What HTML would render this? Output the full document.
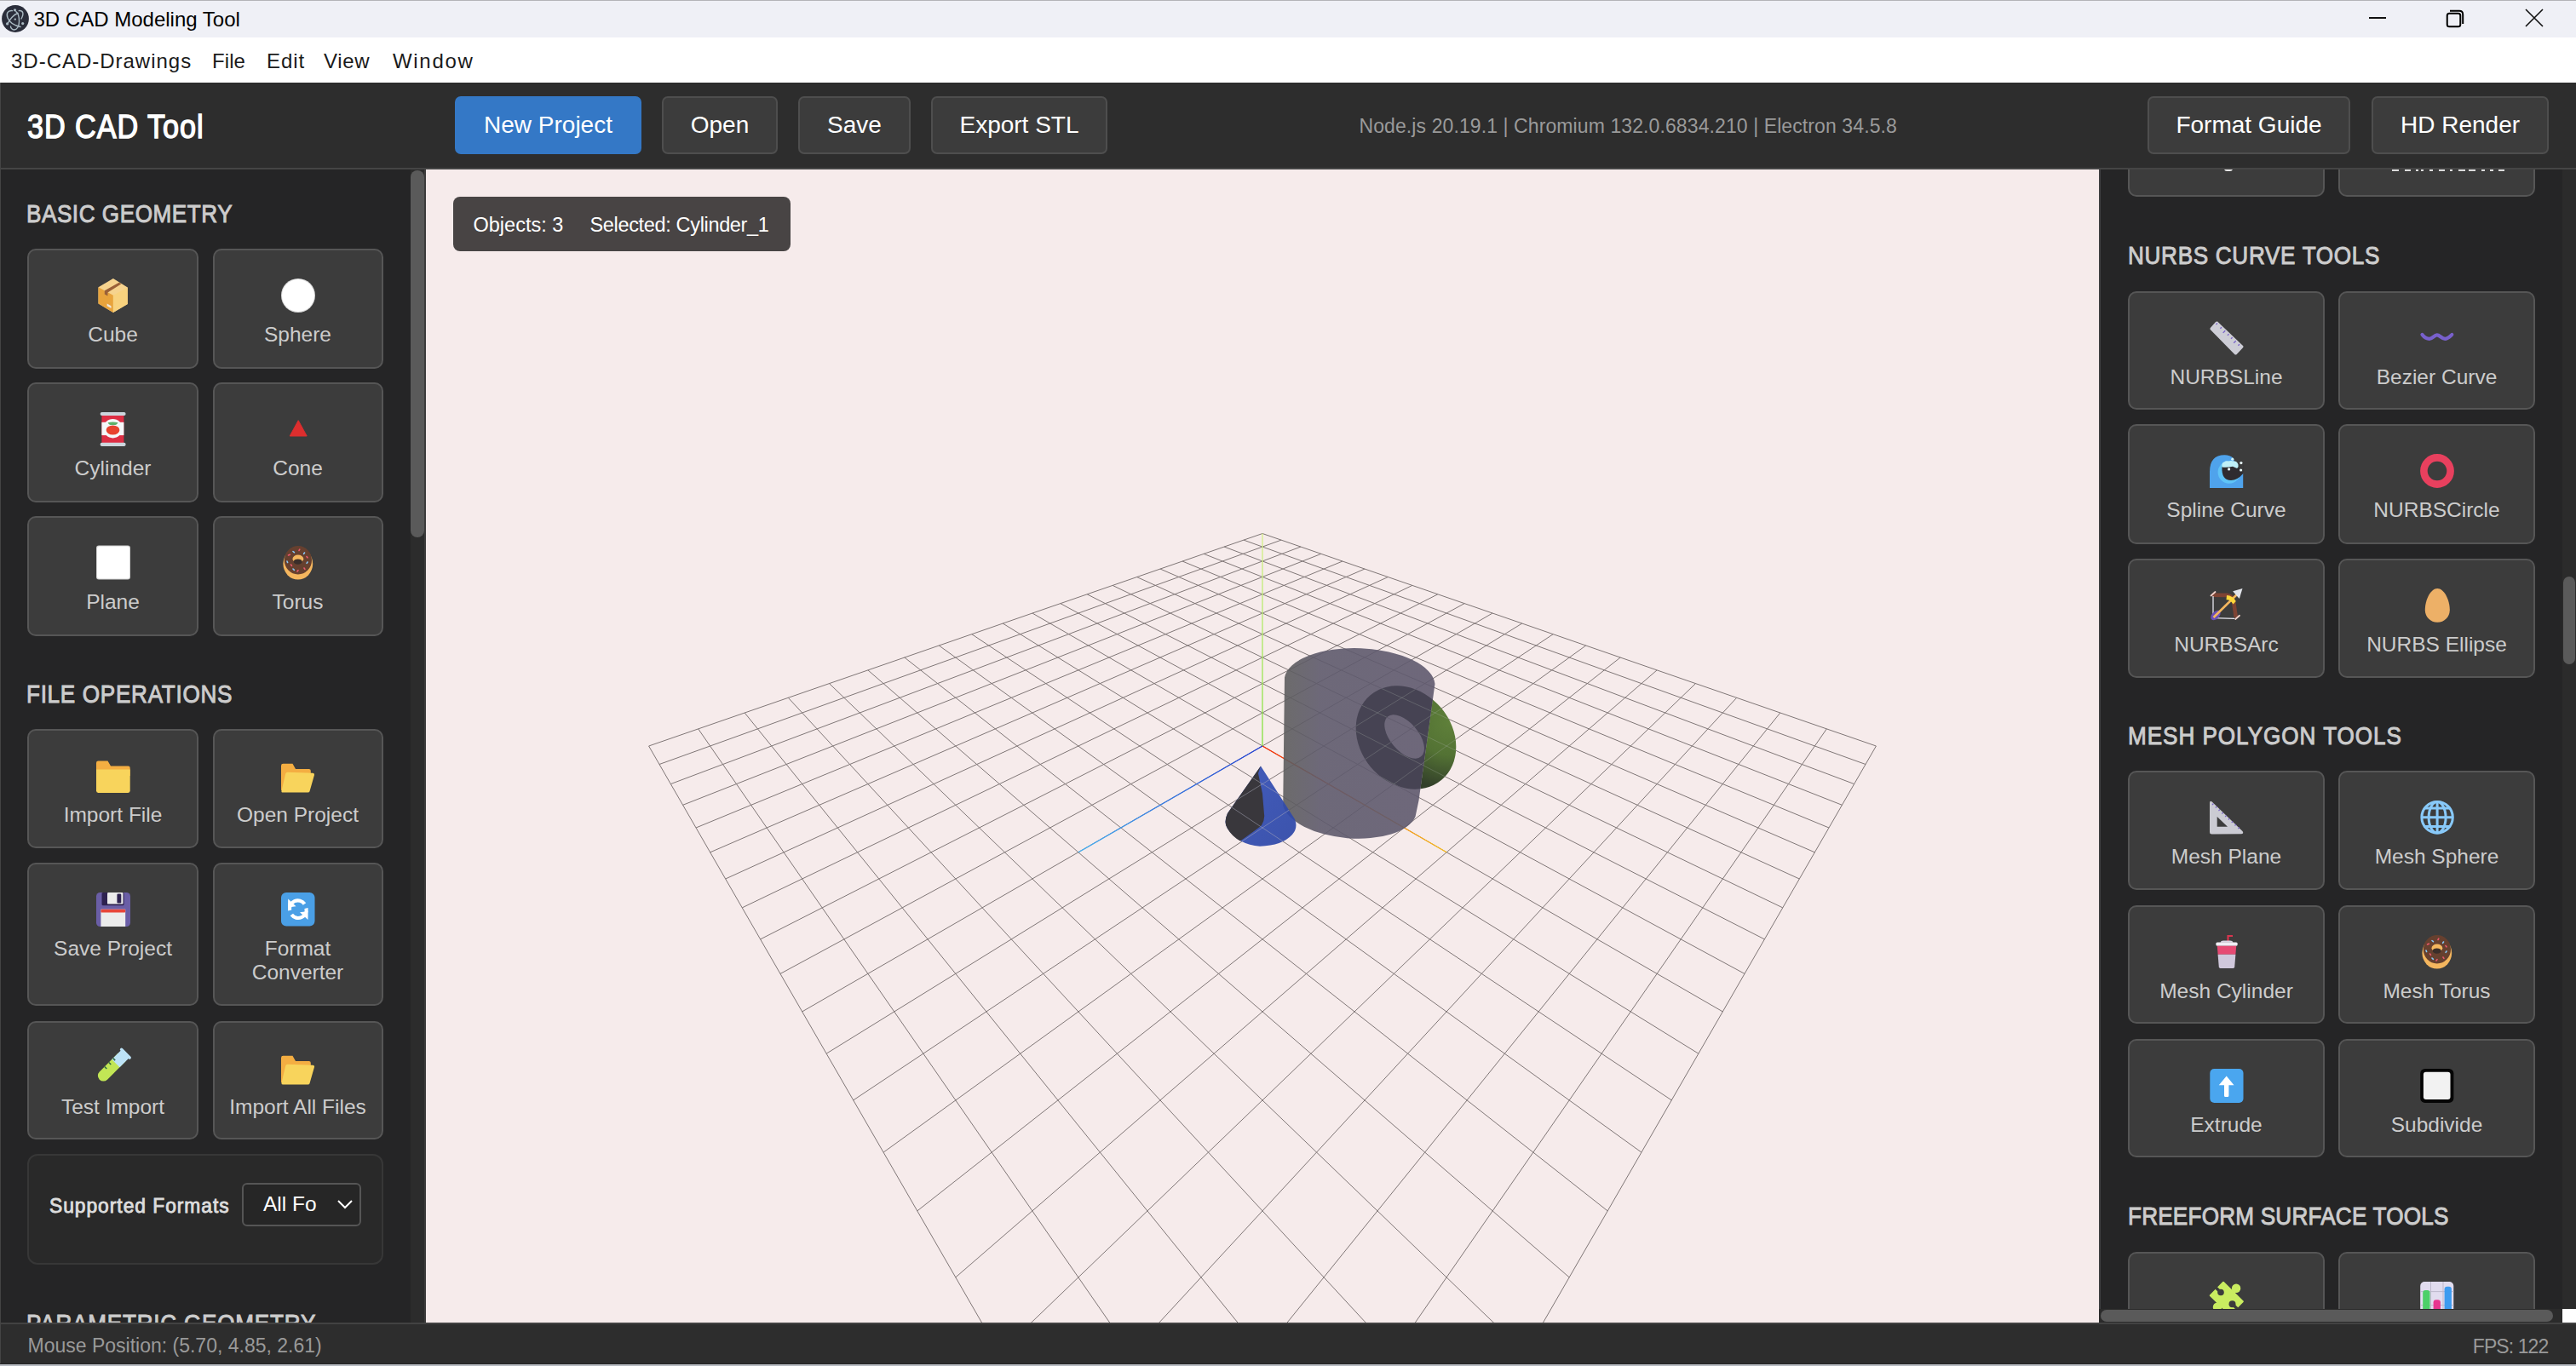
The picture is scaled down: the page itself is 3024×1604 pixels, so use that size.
<!DOCTYPE html><html><head><meta charset="utf-8"><title>3D CAD Modeling Tool</title><style>
html,body{margin:0;padding:0;width:3024px;height:1604px;overflow:hidden;background:#252526;font-family:"Liberation Sans", sans-serif}
.t{position:absolute;white-space:nowrap;line-height:1;font-family:"Liberation Sans", sans-serif}
.btn{position:absolute;box-sizing:border-box;border-radius:10px;background:#3c3c3c;border:2px solid #565656}
.hb{position:absolute;box-sizing:border-box;border-radius:7px;background:#3c3c3c;border:2px solid #4e4e4e}
</style></head><body>
<div style="position:absolute;left:0px;top:0px;width:3024px;height:44px;background:#eff0f6"></div>
<div style="position:absolute;left:0px;top:0px;width:3024px;height:1px;background:#b4b4b8"></div>
<svg width="36" height="36" viewBox="0 0 36 36" style="position:absolute;left:0;top:4px"><circle cx="18" cy="18" r="15.9" fill="#2b2e3b"/><g stroke="#a9b9c2" stroke-width="1.4" fill="none" stroke-linecap="round"><path d="M14.5 8.6 C9 8 7 12 9 17 C11 22 17 26 24 27.5"/><path d="M18.8 9.6 C21 11 22.5 16 22.5 21 C22.5 27 20 31 16.5 31 C14 31 12.5 28.5 12.5 27"/><path d="M22.2 8.6 C27 8 28.5 12 25 18 M9 24 C11 19 16 13 21 11.5"/></g><g fill="#a9b9c2"><circle cx="17.5" cy="7.8" r="1.6"/><circle cx="8.6" cy="23.9" r="1.6"/><circle cx="26.7" cy="23.6" r="1.6"/><circle cx="17.8" cy="18.6" r="1.2"/></g></svg>
<div class="t" style="left:39.50px;top:11.38px;font-size:24px;color:#000;font-weight:400;">3D CAD Modeling Tool</div>
<div style="position:absolute;left:2781px;top:20px;width:20px;height:2px;background:#111"></div>
<svg width="30" height="30" viewBox="0 0 30 30" style="position:absolute;left:2866px;top:6px"><rect x="6.75" y="9.75" width="15.5" height="15.5" rx="2.5" stroke="#000" stroke-width="2" fill="none"/><path d="M10 6.8 L21 6.8 Q25.2 6.8 25.2 11 L25.2 22" stroke="#000" stroke-width="2" fill="none"/></svg>
<svg width="30" height="30" viewBox="0 0 30 30" style="position:absolute;left:2960px;top:6px"><path d="M5 5 L25 25 M25 5 L5 25" stroke="#111" stroke-width="1.6"/></svg>
<div style="position:absolute;left:0px;top:44px;width:3024px;height:53px;background:#ffffff"></div>
<div class="t" style="left:13.00px;top:59.98px;font-size:24px;color:#1b1b1b;font-weight:400;letter-spacing:0.986px;">3D-CAD-Drawings</div>
<div class="t" style="left:248.90px;top:59.98px;font-size:24px;color:#1b1b1b;font-weight:400;letter-spacing:0.133px;">File</div>
<div class="t" style="left:313.00px;top:59.98px;font-size:24px;color:#1b1b1b;font-weight:400;letter-spacing:0.9px;">Edit</div>
<div class="t" style="left:380.10px;top:59.98px;font-size:24px;color:#1b1b1b;font-weight:400;letter-spacing:0.667px;">View</div>
<div class="t" style="left:460.90px;top:59.98px;font-size:24px;color:#1b1b1b;font-weight:400;letter-spacing:1.74px;">Window</div>
<div style="position:absolute;left:0px;top:97px;width:3024px;height:100px;background:#2d2d2d"></div>
<div style="position:absolute;left:0px;top:197px;width:3024px;height:2px;background:#454545"></div>
<div class="t" style="left:31.80px;top:129.73px;font-size:38px;color:#ffffff;font-weight:400;letter-spacing:1.056px;transform:scaleX(0.9);transform-origin:0 0;-webkit-text-stroke:1.4px #ffffff;">3D CAD Tool</div>
<div class="hb" style="left:534px;top:113px;width:219px;height:68px;background:#3478c6;border-color:#3478c6;"></div>
<div class="t" style="left:143.50px;width:1000px;text-align:center;top:132.99px;font-size:28px;color:#ffffff;font-weight:400;">New Project</div>
<div class="hb" style="left:777px;top:113px;width:136px;height:68px;"></div>
<div class="t" style="left:345.00px;width:1000px;text-align:center;top:132.99px;font-size:28px;color:#ffffff;font-weight:400;">Open</div>
<div class="hb" style="left:937px;top:113px;width:132px;height:68px;"></div>
<div class="t" style="left:503.00px;width:1000px;text-align:center;top:132.99px;font-size:28px;color:#ffffff;font-weight:400;">Save</div>
<div class="hb" style="left:1093px;top:113px;width:207px;height:68px;"></div>
<div class="t" style="left:696.50px;width:1000px;text-align:center;top:132.99px;font-size:28px;color:#ffffff;font-weight:400;">Export STL</div>
<div class="hb" style="left:2521px;top:113px;width:238px;height:68px;"></div>
<div class="t" style="left:2140.00px;width:1000px;text-align:center;top:132.99px;font-size:28px;color:#ffffff;font-weight:400;">Format Guide</div>
<div class="hb" style="left:2784px;top:113px;width:208px;height:68px;"></div>
<div class="t" style="left:2388.00px;width:1000px;text-align:center;top:132.99px;font-size:28px;color:#ffffff;font-weight:400;">HD Render</div>
<div class="t" style="left:1595.50px;top:137.13px;font-size:23px;color:#9a9a9a;font-weight:400;letter-spacing:0.097px;">Node.js 20.19.1 | Chromium 132.0.6834.210 | Electron 34.5.8</div>
<div style="position:absolute;left:0px;top:199px;width:500px;height:1354px;background:#252526"></div>
<div class="t" style="left:31.00px;top:235.80px;font-size:30px;color:#cccccc;font-weight:400;letter-spacing:0.628px;transform:scaleX(0.87);transform-origin:0 0;-webkit-text-stroke:1.0px #cccccc;">BASIC GEOMETRY</div>
<div class="btn" style="left:32px;top:292px;width:201px;height:141px"></div>
<svg width="40" height="40" viewBox="0 0 40 40" style="position:absolute;left:112.5px;top:327.0px;overflow:visible"><path d="M19.9 0 L36.8 10.4 L36.8 30 L19.9 40 L2.5 29.4 L2.5 10.2 Z" fill="#f6d38e"/><path d="M2.5 10.2 L19.9 19.8 L19.9 40 L2.5 29.4 Z" fill="#e8a33c"/><path d="M19.9 19.8 L36.8 10.4 L36.8 30 L19.9 40 Z" fill="#f8d27e"/><path d="M9.8 14.3 L26.7 4.7 L29.6 6.3 L13.4 16.4 L13.4 20.4 L9.8 18.5 Z" fill="#9a6038"/><path d="M12.6 29.6 L17.5 32.3 L17.5 35 L12.6 32.3 Z" fill="#efe7dc"/></svg>
<div class="t" style="left:-367.50px;width:1000px;text-align:center;top:381.26px;font-size:24.5px;color:#cccccc;font-weight:400;">Cube</div>
<div class="btn" style="left:249.5px;top:292px;width:200.0px;height:141px"></div>
<svg width="40" height="40" viewBox="0 0 40 40" style="position:absolute;left:329.5px;top:327.0px;overflow:visible"><circle cx="20" cy="20" r="20" fill="#d8d8d8"/><circle cx="20" cy="20" r="19" fill="#ffffff"/></svg>
<div class="t" style="left:-150.50px;width:1000px;text-align:center;top:381.26px;font-size:24.5px;color:#cccccc;font-weight:400;">Sphere</div>
<div class="btn" style="left:32px;top:449px;width:201px;height:141px"></div>
<svg width="40" height="40" viewBox="0 0 40 40" style="position:absolute;left:112.5px;top:484.0px;overflow:visible"><rect x="6.4" y="3" width="26" height="33.5" fill="#dd2e44"/><rect x="4.6" y="0" width="30" height="4" rx="2" fill="#ccd6dd"/><rect x="4.6" y="35.8" width="30" height="4.2" rx="2" fill="#ccd6dd"/><rect x="6.4" y="11.8" width="26" height="15.3" fill="#f5f8fa"/><circle cx="19.5" cy="19.2" r="11.2" fill="#f5f8fa"/><ellipse cx="19.5" cy="21" rx="7.85" ry="5.6" fill="#e8422f"/><path d="M13.6 12.2 Q19.5 11 25.5 12.2 Q24 15.6 19.5 15 Q15 15.6 13.6 12.2Z" fill="#5db06a"/></svg>
<div class="t" style="left:-367.50px;width:1000px;text-align:center;top:538.26px;font-size:24.5px;color:#cccccc;font-weight:400;">Cylinder</div>
<div class="btn" style="left:249.5px;top:449px;width:200.0px;height:141px"></div>
<svg width="40" height="40" viewBox="0 0 40 40" style="position:absolute;left:329.5px;top:484.0px;overflow:visible"><path d="M20.2 9.7 L30.2 28 L10.2 28 Z" fill="#dd2e2e" stroke="#dd2e2e" stroke-width="1" stroke-linejoin="round"/></svg>
<div class="t" style="left:-150.50px;width:1000px;text-align:center;top:538.26px;font-size:24.5px;color:#cccccc;font-weight:400;">Cone</div>
<div class="btn" style="left:32px;top:606px;width:201px;height:141px"></div>
<svg width="40" height="40" viewBox="0 0 40 40" style="position:absolute;left:112.5px;top:641.0px;overflow:visible"><rect x="0" y="-0.5" width="40" height="40" rx="3" fill="#d0d0d0"/><rect x="1" y="0.5" width="38" height="38" rx="2.5" fill="#ffffff"/></svg>
<div class="t" style="left:-367.50px;width:1000px;text-align:center;top:695.26px;font-size:24.5px;color:#cccccc;font-weight:400;">Plane</div>
<div class="btn" style="left:249.5px;top:606px;width:200.0px;height:141px"></div>
<svg width="40" height="40" viewBox="0 0 40 40" style="position:absolute;left:329.5px;top:641.0px;overflow:visible"><ellipse cx="19.8" cy="21" rx="17.4" ry="18.6" fill="#f4b65e"/><ellipse cx="19.9" cy="16.8" rx="16.1" ry="16.7" fill="#66402f"/><ellipse cx="19.9" cy="15.2" rx="6.4" ry="4.6" fill="#f4b65e"/><ellipse cx="19.7" cy="18.6" rx="5" ry="3.2" fill="#3a2e2a"/><g stroke-width="1.6" stroke-linecap="round"><path d="M14 6.5 l1.4 1.2" stroke="#88c9f9"/><path d="M21 5.5 l0.8 -1.3" stroke="#ea596e"/><path d="M27.5 8 l-0.9 1.4" stroke="#88c9f9"/><path d="M8.5 11 l1.8 -0.8" stroke="#ea596e"/><path d="M30 12.5 l1 1.3" stroke="#ea596e"/><path d="M7 18 l0.6 1.5" stroke="#88c9f9"/><path d="M11.5 22 l1 1.4" stroke="#ea596e"/><path d="M31 19 l-0.9 1.4" stroke="#88c9f9"/><path d="M14 27 l1.4 1.3" stroke="#88c9f9"/><path d="M27 26 l0.9 1.4" stroke="#ea596e"/><path d="M19 30 l1 -1.4" stroke="#ea596e"/></g></svg>
<div class="t" style="left:-150.50px;width:1000px;text-align:center;top:695.26px;font-size:24.5px;color:#cccccc;font-weight:400;">Torus</div>
<div class="t" style="left:31.00px;top:799.50px;font-size:30px;color:#cccccc;font-weight:400;letter-spacing:0.805px;transform:scaleX(0.87);transform-origin:0 0;-webkit-text-stroke:1.0px #cccccc;">FILE OPERATIONS</div>
<div class="btn" style="left:32px;top:856px;width:201px;height:140px"></div>
<svg width="40" height="40" viewBox="0 0 40 40" style="position:absolute;left:112.5px;top:891.0px;overflow:visible"><path d="M0 5 Q0 2.6 2.4 2.6 L13.5 2.6 L17 8.6 L37.5 8.6 Q39.7 8.6 39.7 10.8 L39.7 20 L0 20 Z" fill="#f4ae42"/><path d="M0 12.4 L39.7 12.4 L39.7 37.6 Q39.7 40 37.3 40 L2.4 40 Q0 40 0 37.6 Z" fill="#f8d45c"/></svg>
<div class="t" style="left:-367.50px;width:1000px;text-align:center;top:945.26px;font-size:24.5px;color:#cccccc;font-weight:400;">Import File</div>
<div class="btn" style="left:249.5px;top:856px;width:200.0px;height:140px"></div>
<svg width="40" height="40" viewBox="0 0 40 40" style="position:absolute;left:329.5px;top:891.0px;overflow:visible"><path d="M0 8.2 Q0 5.8 2.4 5.8 L13.5 5.8 L17 11.9 L32.6 11.9 Q34.8 11.9 34.8 14 L34.8 30 L0 37 Z" fill="#f4ae42"/><path d="M7.4 15.7 L37.4 16.8 Q39.5 17 39 19 L33.5 38.2 Q33 39.6 31.5 39.6 L2.4 39.6 Q0 39.6 0.5 37.4 L5.2 17.6 Q5.6 15.7 7.4 15.7 Z" fill="#f8d45c"/></svg>
<div class="t" style="left:-150.50px;width:1000px;text-align:center;top:945.26px;font-size:24.5px;color:#cccccc;font-weight:400;">Open Project</div>
<div class="btn" style="left:32px;top:1013px;width:201px;height:168px"></div>
<svg width="40" height="40" viewBox="0 0 40 40" style="position:absolute;left:112.5px;top:1048.0px;overflow:visible"><rect x="0" y="0" width="40" height="40" rx="4.5" fill="#6a5ea6"/><rect x="6.5" y="0" width="26.1" height="15.2" rx="1.5" fill="#2e2250"/><rect x="13" y="0" width="18.5" height="13.6" rx="1.2" fill="#ececec"/><rect x="24.4" y="1.5" width="4.9" height="10.9" rx="1.2" fill="#2e2250"/><rect x="5.4" y="19.7" width="28.8" height="20.3" fill="#ececec"/><rect x="5.4" y="19.7" width="28.8" height="3.8" rx="1" fill="#e8463a"/></svg>
<div class="t" style="left:-367.50px;width:1000px;text-align:center;top:1102.26px;font-size:24.5px;color:#cccccc;font-weight:400;">Save Project</div>
<div class="btn" style="left:249.5px;top:1013px;width:200.0px;height:168px"></div>
<svg width="40" height="40" viewBox="0 0 40 40" style="position:absolute;left:329.5px;top:1048.0px;overflow:visible"><rect x="0" y="0" width="39.5" height="39.5" rx="6" fill="#4a9fe6"/><path d="M10.2 21 A9.6 9.6 0 0 1 27.5 13.5" stroke="#fff" stroke-width="4.2" fill="none"/><path d="M8.2 7.5 L8 17.5 L17.5 16.3 Z" fill="#fff"/><path d="M29.5 18.5 A9.6 9.6 0 0 1 12.3 26" stroke="#fff" stroke-width="4.2" fill="none"/><path d="M31.5 32 L31.6 22 L22 23.3 Z" fill="#fff"/></svg>
<div class="t" style="left:-150.50px;width:1000px;text-align:center;top:1102.26px;font-size:24.5px;color:#cccccc;font-weight:400;">Format</div>
<div class="t" style="left:-150.50px;width:1000px;text-align:center;top:1130.26px;font-size:24.5px;color:#cccccc;font-weight:400;">Converter</div>
<div class="btn" style="left:32px;top:1199px;width:201px;height:139px"></div>
<svg width="40" height="40" viewBox="0 0 40 40" style="position:absolute;left:112.5px;top:1234.0px;overflow:visible"><g transform="rotate(45 19 18.5)"><rect x="12.5" y="-3" width="13" height="43" rx="6.5" fill="#c2e655"/><path d="M12.5 -3 L25.5 -3 L25.5 13 L12.5 13 Z" fill="#bde3f7"/><rect x="10.5" y="-5" width="17" height="3.5" rx="1.7" fill="#bde3f7"/><path d="M12.5 11 l3.5 0 M12.5 18 l3.5 0 M12.5 25 l3.5 0" stroke="#2f6b45" stroke-width="1.6"/></g></svg>
<div class="t" style="left:-367.50px;width:1000px;text-align:center;top:1288.26px;font-size:24.5px;color:#cccccc;font-weight:400;">Test Import</div>
<div class="btn" style="left:249.5px;top:1199px;width:200.0px;height:139px"></div>
<svg width="40" height="40" viewBox="0 0 40 40" style="position:absolute;left:329.5px;top:1234.0px;overflow:visible"><path d="M0 8.2 Q0 5.8 2.4 5.8 L13.5 5.8 L17 11.9 L32.6 11.9 Q34.8 11.9 34.8 14 L34.8 30 L0 37 Z" fill="#f4ae42"/><path d="M7.4 15.7 L37.4 16.8 Q39.5 17 39 19 L33.5 38.2 Q33 39.6 31.5 39.6 L2.4 39.6 Q0 39.6 0.5 37.4 L5.2 17.6 Q5.6 15.7 7.4 15.7 Z" fill="#f8d45c"/></svg>
<div class="t" style="left:-150.50px;width:1000px;text-align:center;top:1288.26px;font-size:24.5px;color:#cccccc;font-weight:400;">Import All Files</div>
<div style="position:absolute;left:32px;top:1355px;width:418px;height:130px;box-sizing:border-box;border:2px solid #373737;border-radius:12px;background:#292929"></div>
<div class="t" style="left:57.50px;top:1404.18px;font-size:24px;color:#dddddd;font-weight:400;letter-spacing:1.02px;transform:scaleX(0.95);transform-origin:0 0;-webkit-text-stroke:0.9px #dddddd;">Supported Formats</div>
<div style="position:absolute;left:284px;top:1389px;width:140px;height:51px;box-sizing:border-box;border:2px solid #555;border-radius:6px;background:#262626"></div>
<div class="t" style="left:309.00px;top:1402.16px;font-size:24.5px;color:#ffffff;font-weight:400;">All Fo</div>
<svg width="20" height="14" viewBox="0 0 20 14" style="position:absolute;left:395px;top:1407px"><path d="M2 3 L10 11 L18 3" stroke="#fff" stroke-width="2" fill="none"/></svg>
<div class="t" style="left:31.00px;top:1538.60px;font-size:30px;color:#cccccc;font-weight:400;letter-spacing:0.894px;transform:scaleX(0.87);transform-origin:0 0;-webkit-text-stroke:1.0px #cccccc;">PARAMETRIC GEOMETRY</div>
<div style="position:absolute;left:482px;top:199px;width:16px;height:1354px;background:#2c2c2c"></div>
<div style="position:absolute;left:498px;top:199px;width:2px;height:1354px;background:#3c3b3b"></div>
<div style="position:absolute;left:482px;top:200px;width:16px;height:431px;background:#5a5a5a;border-radius:8px"></div>
<div style="position:absolute;left:500px;top:199px;width:1964px;height:1354px;background:#f6ebeb;overflow:hidden">
<svg width="1964" height="1354" viewBox="500 199 1964 1354" style="position:absolute;left:0;top:0"><defs><linearGradient id="gx" gradientUnits="userSpaceOnUse" x1="1482.0" y1="876.0" x2="1698.1" y2="1000.8"><stop offset="0" stop-color="#ff2a00"/><stop offset="1" stop-color="#ffc21a"/></linearGradient><linearGradient id="gy" gradientUnits="userSpaceOnUse" x1="1482.0" y1="876.0" x2="1482.0" y2="626.5"><stop offset="0" stop-color="#7fe03a"/><stop offset="1" stop-color="#d7f08a"/></linearGradient><linearGradient id="gz" gradientUnits="userSpaceOnUse" x1="1482.0" y1="876.0" x2="1265.9" y2="1000.8"><stop offset="0" stop-color="#1d3ddb"/><stop offset="1" stop-color="#47b4f5"/></linearGradient></defs><path d="M1482.0 626.5L761.6 876.0M1482.0 626.5L2202.4 876.0M1504.1 634.1L774.0 897.5M1459.9 634.1L2190.0 897.5M1527.0 642.0L787.3 920.6M1437.0 642.0L2176.7 920.6M1551.0 650.3L801.6 945.3M1413.0 650.3L2162.4 945.3M1576.0 659.0L817.0 972.0M1388.0 659.0L2147.0 972.0M1602.1 668.0L833.7 1000.8M1361.9 668.0L2130.3 1000.8M1629.4 677.5L851.7 1032.0M1334.6 677.5L2112.3 1032.0M1657.9 687.4L871.2 1065.9M1306.1 687.4L2092.8 1065.9M1687.8 697.8L892.6 1102.9M1276.2 697.8L2071.4 1102.9M1719.2 708.6L916.0 1143.4M1244.8 708.6L2048.0 1143.4M1752.1 720.0L941.7 1187.9M1211.9 720.0L2022.3 1187.9M1786.8 732.0L970.1 1237.2M1177.2 732.0L1993.9 1237.2M1823.2 744.7L1001.7 1291.9M1140.8 744.7L1962.3 1291.9M1861.7 758.0L1037.1 1353.1M1102.3 758.0L1926.9 1353.1M1902.2 772.0L1076.8 1421.9M1061.8 772.0L1887.2 1421.9M1945.1 786.9L1121.8 1499.9M1018.9 786.9L1842.2 1499.9M1990.5 802.6L1173.3 1589.0M973.5 802.6L1790.7 1589.0M2038.7 819.3L1232.6 1691.8M925.3 819.3L1731.4 1691.8M2089.8 837.0L1301.9 1811.8M874.2 837.0L1662.1 1811.8M2144.3 855.9L1383.8 1953.6M819.7 855.9L1580.2 1953.6M2202.4 876.0L1482.0 2123.7M761.6 876.0L1482.0 2123.7" stroke="#7f7676" stroke-width="1" fill="none"/><path d="M1482.0 876.0L1698.1 1000.8" stroke="url(#gx)" stroke-width="1.3" fill="none"/><path d="M1482.0 876.0L1482.0 626.5" stroke="url(#gy)" stroke-width="1.3" fill="none"/><path d="M1482.0 876.0L1265.9 1000.8" stroke="url(#gz)" stroke-width="1.3" fill="none"/>
<defs>
 <clipPath id="cylclip"><path d="M1508 795.5 A88.5 40.5 2.5 0 1 1684.5 803 L1665.5 940 L1661.5 959 A79 38 5 0 1 1506.2 946 Z"/></clipPath>
 <clipPath id="outcyl"><path d="M1684 780 L1740 780 L1740 960 L1665.5 940 L1684 806 Z"/></clipPath>
 <linearGradient id="cylg" x1="0" y1="0" x2="1" y2="0"><stop offset="0" stop-color="#5d5d5d"/><stop offset="0.25" stop-color="#5e5a6c"/><stop offset="1" stop-color="#5f596e"/></linearGradient>
 <radialGradient id="greeng" gradientUnits="userSpaceOnUse" cx="1702" cy="848" r="78"><stop offset="0" stop-color="#5f803a"/><stop offset="0.5" stop-color="#537234"/><stop offset="1" stop-color="#33402a"/></radialGradient>
 <linearGradient id="coneb" x1="0" y1="0" x2="1" y2="1"><stop offset="0" stop-color="#3551b8"/><stop offset="1" stop-color="#2f48a8"/></linearGradient>
</defs>
<path d="M1508 795.5 A88.5 40.5 2.5 0 1 1684.5 803 L1665.5 940 L1661.5 959 A79 38 5 0 1 1506.2 946 Z" fill="url(#cylg)" opacity="0.9"/>
<clipPath id="torouter"><ellipse cx="1650.5" cy="866" rx="65" ry="54" transform="rotate(50 1650.5 866)"/></clipPath><g clip-path="url(#outcyl)"><rect x="1640" y="780" width="100" height="180" fill="url(#greeng)" clip-path="url(#torouter)"/></g>
<g clip-path="url(#cylclip)">
 <path fill-rule="evenodd" fill="#3f3d4c" opacity="0.85" d="M1650.5 866 m-65 0 a65 54 0 1 0 130 0 a65 54 0 1 0 -130 0 Z M1648.5 866.8 m-30.5 0 a30.5 16.5 0 1 0 61 0 a30.5 16.5 0 1 0 -61 0 Z" transform="rotate(50 1650.5 866)"/>
</g>
<g opacity="0.93">
 <path d="M1480 899.5 L1441 955 Q1436 966 1441 973 Q1454 992 1479 993.7 Q1505 993 1517 980 Q1524 972 1520 962 Z" fill="url(#coneb)"/>
 <path d="M1480 899.5 L1441 955 Q1436 966 1441 973 Q1446 982 1456 987.5 Q1478 972 1481 969 Q1485 962 1484 956 L1482 932 L1477 908 Z" fill="#2b2a2f"/>
</g>
<defs><clipPath id="coneclip"><path d="M1480 899.5 L1441 955 Q1436 966 1441 973 Q1454 992 1479 993.7 Q1505 993 1517 980 Q1524 972 1520 962 Z"/></clipPath><clipPath id="torclip"><path clip-rule="evenodd" d="M1650.5 866 m-65 0 a65 54 0 1 0 130 0 a65 54 0 1 0 -130 0 Z M1648.5 866.8 m-30.5 0 a30.5 16.5 0 1 0 61 0 a30.5 16.5 0 1 0 -61 0 Z" transform="rotate(50 1650.5 866)"/></clipPath></defs><g clip-path="url(#coneclip)"><path d="M1482.0 626.5L761.6 876.0M1482.0 626.5L2202.4 876.0M1504.1 634.1L774.0 897.5M1459.9 634.1L2190.0 897.5M1527.0 642.0L787.3 920.6M1437.0 642.0L2176.7 920.6M1551.0 650.3L801.6 945.3M1413.0 650.3L2162.4 945.3M1576.0 659.0L817.0 972.0M1388.0 659.0L2147.0 972.0M1602.1 668.0L833.7 1000.8M1361.9 668.0L2130.3 1000.8M1629.4 677.5L851.7 1032.0M1334.6 677.5L2112.3 1032.0M1657.9 687.4L871.2 1065.9M1306.1 687.4L2092.8 1065.9M1687.8 697.8L892.6 1102.9M1276.2 697.8L2071.4 1102.9M1719.2 708.6L916.0 1143.4M1244.8 708.6L2048.0 1143.4M1752.1 720.0L941.7 1187.9M1211.9 720.0L2022.3 1187.9M1786.8 732.0L970.1 1237.2M1177.2 732.0L1993.9 1237.2M1823.2 744.7L1001.7 1291.9M1140.8 744.7L1962.3 1291.9M1861.7 758.0L1037.1 1353.1M1102.3 758.0L1926.9 1353.1M1902.2 772.0L1076.8 1421.9M1061.8 772.0L1887.2 1421.9M1945.1 786.9L1121.8 1499.9M1018.9 786.9L1842.2 1499.9M1990.5 802.6L1173.3 1589.0M973.5 802.6L1790.7 1589.0M2038.7 819.3L1232.6 1691.8M925.3 819.3L1731.4 1691.8M2089.8 837.0L1301.9 1811.8M874.2 837.0L1662.1 1811.8M2144.3 855.9L1383.8 1953.6M819.7 855.9L1580.2 1953.6M2202.4 876.0L1482.0 2123.7M761.6 876.0L1482.0 2123.7" stroke="#b8b8c8" stroke-width="1" fill="none" opacity="0.5"/></g><g clip-path="url(#torclip)"><path d="M1482.0 626.5L761.6 876.0M1482.0 626.5L2202.4 876.0M1504.1 634.1L774.0 897.5M1459.9 634.1L2190.0 897.5M1527.0 642.0L787.3 920.6M1437.0 642.0L2176.7 920.6M1551.0 650.3L801.6 945.3M1413.0 650.3L2162.4 945.3M1576.0 659.0L817.0 972.0M1388.0 659.0L2147.0 972.0M1602.1 668.0L833.7 1000.8M1361.9 668.0L2130.3 1000.8M1629.4 677.5L851.7 1032.0M1334.6 677.5L2112.3 1032.0M1657.9 687.4L871.2 1065.9M1306.1 687.4L2092.8 1065.9M1687.8 697.8L892.6 1102.9M1276.2 697.8L2071.4 1102.9M1719.2 708.6L916.0 1143.4M1244.8 708.6L2048.0 1143.4M1752.1 720.0L941.7 1187.9M1211.9 720.0L2022.3 1187.9M1786.8 732.0L970.1 1237.2M1177.2 732.0L1993.9 1237.2M1823.2 744.7L1001.7 1291.9M1140.8 744.7L1962.3 1291.9M1861.7 758.0L1037.1 1353.1M1102.3 758.0L1926.9 1353.1M1902.2 772.0L1076.8 1421.9M1061.8 772.0L1887.2 1421.9M1945.1 786.9L1121.8 1499.9M1018.9 786.9L1842.2 1499.9M1990.5 802.6L1173.3 1589.0M973.5 802.6L1790.7 1589.0M2038.7 819.3L1232.6 1691.8M925.3 819.3L1731.4 1691.8M2089.8 837.0L1301.9 1811.8M874.2 837.0L1662.1 1811.8M2144.3 855.9L1383.8 1953.6M819.7 855.9L1580.2 1953.6M2202.4 876.0L1482.0 2123.7M761.6 876.0L1482.0 2123.7" stroke="#b0b8b0" stroke-width="1" fill="none" opacity="0.28"/></g></svg>
</div>
<div style="position:absolute;left:532px;top:231px;width:396px;height:63.5px;background:rgba(0,0,0,0.71);border-radius:8px"></div>
<div class="t" style="left:555.50px;top:252.90px;font-size:23.5px;color:#ffffff;font-weight:400;">Objects: 3</div>
<div class="t" style="left:692.50px;top:252.90px;font-size:23.5px;color:#ffffff;font-weight:400;letter-spacing:-0.34px;">Selected: Cylinder_1</div>
<div style="position:absolute;left:2464px;top:199px;width:560px;height:1354px;background:#252526;overflow:hidden">
</div>
<div style="position:absolute;left:2464px;top:199px;width:2px;height:1338px;background:#3f3f41"></div>
<div style="position:absolute;left:2464px;top:199px;width:544px;height:1338px;overflow:hidden">
<div class="btn" style="left:34px;top:-108px;width:231px;height:140px"></div>
<div class="btn" style="left:281px;top:-108px;width:231px;height:140px"></div>
<div style="position:absolute;left:147px;top:-1px;width:9.5px;height:3px;border-radius:0 0 5px 5px;background:#e8e8e8"></div>
<div style="position:absolute;left:344px;top:0px;width:8px;height:1.5px;background:#dcdcdc"></div>
<div style="position:absolute;left:359px;top:0px;width:7px;height:1.5px;background:#dcdcdc"></div>
<div style="position:absolute;left:372px;top:0px;width:3px;height:1.5px;background:#dcdcdc"></div>
<div style="position:absolute;left:378px;top:0px;width:3px;height:1.5px;background:#dcdcdc"></div>
<div style="position:absolute;left:388px;top:0px;width:4px;height:1.5px;background:#dcdcdc"></div>
<div style="position:absolute;left:399px;top:0px;width:7px;height:1.5px;background:#dcdcdc"></div>
<div style="position:absolute;left:412px;top:0px;width:3px;height:1.5px;background:#dcdcdc"></div>
<div style="position:absolute;left:422px;top:0px;width:8px;height:1.5px;background:#dcdcdc"></div>
<div style="position:absolute;left:434px;top:0px;width:8px;height:1.5px;background:#dcdcdc"></div>
<div style="position:absolute;left:449px;top:0px;width:4px;height:1.5px;background:#dcdcdc"></div>
<div style="position:absolute;left:459px;top:0px;width:4px;height:1.5px;background:#dcdcdc"></div>
<div style="position:absolute;left:469px;top:0px;width:7px;height:1.5px;background:#dcdcdc"></div>
</div>
<div class="t" style="left:2498.00px;top:284.60px;font-size:30px;color:#cccccc;font-weight:400;letter-spacing:0.805px;transform:scaleX(0.87);transform-origin:0 0;-webkit-text-stroke:1.0px #cccccc;">NURBS CURVE TOOLS</div>
<div class="btn" style="left:2498px;top:342px;width:231px;height:139px"></div>
<svg width="40" height="40" viewBox="0 0 40 40" style="position:absolute;left:2593.5px;top:376.5px;overflow:visible"><path d="M9.1 0.6 L39.3 29.2 Q40 30.3 39 31.2 L31.5 39.2 Q30.4 40 29.4 39.2 L0.7 10 Q0 9 0.8 8 L7 1 Q8 0 9.1 0.6 Z" fill="#cdcdd6"/><g stroke="#7a64c8" stroke-width="1.3"><path d="M9 2.5 l-1.6 1.6 M14 7.2 l-1.6 1.6 M18.3 11.3 l-2.6 2.6 M22.5 15.3 l-1.6 1.6 M26.6 19.2 l-1.6 1.6 M30.8 23.2 l-2.6 2.6 M35 27.2 l-1.6 1.6"/></g></svg>
<div class="t" style="left:2113.50px;width:1000px;text-align:center;top:431.26px;font-size:24.5px;color:#cccccc;font-weight:400;">NURBSLine</div>
<div class="btn" style="left:2745px;top:342px;width:231px;height:139px"></div>
<svg width="40" height="40" viewBox="0 0 40 40" style="position:absolute;left:2840.5px;top:376.5px;overflow:visible"><path d="M2.5 16 C5 19.3 8 20.8 11 20.8 C14.5 20.8 16.5 16.4 19.8 16.4 C23 16.4 25.5 20.8 29.2 20.8 C32.5 20.8 35 18 37.3 16" stroke="#7860cc" stroke-width="4.2" fill="none" stroke-linecap="round"/></svg>
<div class="t" style="left:2360.50px;width:1000px;text-align:center;top:431.26px;font-size:24.5px;color:#cccccc;font-weight:400;">Bezier Curve</div>
<div class="btn" style="left:2498px;top:498px;width:231px;height:141px"></div>
<svg width="40" height="40" viewBox="0 0 40 40" style="position:absolute;left:2593.5px;top:532.5px;overflow:visible"><path d="M0 40 V21 Q0 1.3 17.5 1.3 Q24 1.3 27.5 5 L31 14 L39.2 22.5 V40 Z" fill="#4fa3ec"/><circle cx="22.8" cy="21.5" r="13.2" fill="#5fc4f7"/><path d="M14.5 15 Q13.5 31 25 31 Q32.5 31 39.3 23 L39.3 13 L30 12 Z" fill="#2f2c30"/><path d="M39.3 10 L39.3 22.6 L31.5 14 Z M27.5 0 L40 0 L40 10 L31 10 Z" fill="#3c3c3c"/><path d="M14.5 15.5 Q13.8 10 17 9.5 Q19 7.6 22 8.6 Q25 7.3 28 8.6 Q31 8 32.5 10.5 Q34 12 33.5 15 Q33 17.5 31 16.5 L27 14.8 Q20 16.5 14.5 15.5Z" fill="#bff0f8"/><circle cx="26.8" cy="6.2" r="1.6" fill="#cff4fa"/><circle cx="36.9" cy="10.6" r="1.6" fill="#e8f8fa"/><circle cx="22.6" cy="17.9" r="1.6" fill="#e8f8fa"/><circle cx="36.6" cy="19" r="1.6" fill="#e8f8fa"/></svg>
<div class="t" style="left:2113.50px;width:1000px;text-align:center;top:587.26px;font-size:24.5px;color:#cccccc;font-weight:400;">Spline Curve</div>
<div class="btn" style="left:2745px;top:498px;width:231px;height:141px"></div>
<svg width="40" height="40" viewBox="0 0 40 40" style="position:absolute;left:2840.5px;top:532.5px;overflow:visible"><circle cx="20" cy="20" r="15.6" stroke="#e8405e" stroke-width="8.6" fill="none"/></svg>
<div class="t" style="left:2360.50px;width:1000px;text-align:center;top:587.26px;font-size:24.5px;color:#cccccc;font-weight:400;">NURBSCircle</div>
<div class="btn" style="left:2498px;top:656px;width:231px;height:140px"></div>
<svg width="40" height="40" viewBox="0 0 40 40" style="position:absolute;left:2593.5px;top:690.5px;overflow:visible"><path d="M3 7.8 L19.8 7.9 Q26 8.5 28 15 L30.8 34" stroke="#7e4333" stroke-width="4.6" fill="none"/><path d="M4 9 L4 34.6 L29.3 35.4" stroke="#e6e6ee" stroke-width="1.3" fill="none"/><path d="M1.5 8.5 L6.5 4 M30.2 36 L35 31.8" stroke="#f0d0c8" stroke-width="1.8" stroke-linecap="round"/><ellipse cx="7" cy="31.5" rx="6.8" ry="4.2" fill="#6a4fb8" transform="rotate(-45 7 31.5)"/><path d="M4.5 34 L33 6" stroke="#f4b65e" stroke-width="2.6"/><path d="M27.1 3.2 L38.5 -0.1 L34.8 12 Z" fill="#e1e4ea"/><path d="M20 8 Q27 8.3 30.8 15 L27.5 18.5 Q24.5 13 19.5 13.2 Z" fill="#fdd83a"/></svg>
<div class="t" style="left:2113.50px;width:1000px;text-align:center;top:745.26px;font-size:24.5px;color:#cccccc;font-weight:400;">NURBSArc</div>
<div class="btn" style="left:2745px;top:656px;width:231px;height:140px"></div>
<svg width="40" height="40" viewBox="0 0 40 40" style="position:absolute;left:2840.5px;top:690.5px;overflow:visible"><path d="M20.3 0 C28 0 34.8 13 34.8 25.3 C34.8 33.5 28.5 39.8 20.3 39.8 C12.2 39.8 5.8 33.5 5.8 25.3 C5.8 13 12.5 0 20.3 0 Z" fill="#edb067"/></svg>
<div class="t" style="left:2360.50px;width:1000px;text-align:center;top:745.26px;font-size:24.5px;color:#cccccc;font-weight:400;">NURBS Ellipse</div>
<div class="t" style="left:2498.00px;top:848.60px;font-size:30px;color:#cccccc;font-weight:400;letter-spacing:1.109px;transform:scaleX(0.87);transform-origin:0 0;-webkit-text-stroke:1.0px #cccccc;">MESH POLYGON TOOLS</div>
<div class="btn" style="left:2498px;top:905px;width:231px;height:140px"></div>
<svg width="40" height="40" viewBox="0 0 40 40" style="position:absolute;left:2593.5px;top:939.5px;overflow:visible"><path d="M0 3 Q0 -0.5 3 1.7 L38.5 36 Q40.5 39 37 39.3 L2.5 39.5 Q0 39.5 0 37 Z" fill="#cbcbd3"/><path d="M8.7 19.1 L21 30.7 L8.7 30.7 Z" fill="#3c3c3c"/><g stroke="#7a64c8" stroke-width="1.1"><path d="M4.5 3.5 l-1.5 1.5 M8.3 7 l-1.5 1.5 M12 10.5 l-1.5 1.5 M15.8 14 l-1.5 1.5 M19.6 17.5 l-1.5 1.5 M23.4 21 l-1.5 1.5 M27.2 24.5 l-1.5 1.5 M31 28 l-1.5 1.5 M34.8 31.5 l-1.5 1.5"/></g></svg>
<div class="t" style="left:2113.50px;width:1000px;text-align:center;top:994.26px;font-size:24.5px;color:#cccccc;font-weight:400;">Mesh Plane</div>
<div class="btn" style="left:2745px;top:905px;width:231px;height:140px"></div>
<svg width="40" height="40" viewBox="0 0 40 40" style="position:absolute;left:2840.5px;top:939.5px;overflow:visible"><circle cx="20.1" cy="19.8" r="18.2" stroke="#88c9f9" stroke-width="3" fill="none"/><ellipse cx="20.1" cy="19.8" rx="10" ry="18.2" stroke="#88c9f9" stroke-width="3" fill="none"/><path d="M20.1 1.6 L20.1 38 M1.9 19.8 L38.3 19.8 M4.5 9 L35.7 9 M4.5 30.6 L35.7 30.6" stroke="#88c9f9" stroke-width="3"/></svg>
<div class="t" style="left:2360.50px;width:1000px;text-align:center;top:994.26px;font-size:24.5px;color:#cccccc;font-weight:400;">Mesh Sphere</div>
<div class="btn" style="left:2498px;top:1063px;width:231px;height:139px"></div>
<svg width="40" height="40" viewBox="0 0 40 40" style="position:absolute;left:2593.5px;top:1097.5px;overflow:visible"><path d="M21.5 7 L21.5 1 L27 1" stroke="#d8354e" stroke-width="2.2" fill="none"/><path d="M12.5 8.8 Q13 6.5 16 6.5 L24 6.5 Q27 6.5 27.5 8.8 Z" fill="#dcd6e4"/><rect x="7.3" y="8.5" width="25.4" height="4.2" rx="1.6" fill="#f0eef4"/><path d="M8.8 12.7 L31.2 12.7 L30.4 22.7 L9.6 22.7 Z" fill="#e64a73"/><path d="M9.6 22.7 L30.4 22.7 L29.2 37.6 Q29 39 27.6 39 L12.4 39 Q11 39 10.8 37.6 Z" fill="#d0c8dc"/></svg>
<div class="t" style="left:2113.50px;width:1000px;text-align:center;top:1152.26px;font-size:24.5px;color:#cccccc;font-weight:400;">Mesh Cylinder</div>
<div class="btn" style="left:2745px;top:1063px;width:231px;height:139px"></div>
<svg width="40" height="40" viewBox="0 0 40 40" style="position:absolute;left:2840.5px;top:1097.5px;overflow:visible"><ellipse cx="19.8" cy="21" rx="17.4" ry="18.6" fill="#f4b65e"/><ellipse cx="19.9" cy="16.8" rx="16.1" ry="16.7" fill="#66402f"/><ellipse cx="19.9" cy="15.2" rx="6.4" ry="4.6" fill="#f4b65e"/><ellipse cx="19.7" cy="18.6" rx="5" ry="3.2" fill="#3a2e2a"/><g stroke-width="1.6" stroke-linecap="round"><path d="M14 6.5 l1.4 1.2" stroke="#88c9f9"/><path d="M21 5.5 l0.8 -1.3" stroke="#ea596e"/><path d="M27.5 8 l-0.9 1.4" stroke="#88c9f9"/><path d="M8.5 11 l1.8 -0.8" stroke="#ea596e"/><path d="M30 12.5 l1 1.3" stroke="#ea596e"/><path d="M7 18 l0.6 1.5" stroke="#88c9f9"/><path d="M11.5 22 l1 1.4" stroke="#ea596e"/><path d="M31 19 l-0.9 1.4" stroke="#88c9f9"/><path d="M14 27 l1.4 1.3" stroke="#88c9f9"/><path d="M27 26 l0.9 1.4" stroke="#ea596e"/><path d="M19 30 l1 -1.4" stroke="#ea596e"/></g></svg>
<div class="t" style="left:2360.50px;width:1000px;text-align:center;top:1152.26px;font-size:24.5px;color:#cccccc;font-weight:400;">Mesh Torus</div>
<div class="btn" style="left:2498px;top:1220px;width:231px;height:139px"></div>
<svg width="40" height="40" viewBox="0 0 40 40" style="position:absolute;left:2593.5px;top:1254.5px;overflow:visible"><rect x="0.3" y="0" width="39.2" height="39.9" rx="5" fill="#4aa6ef"/><path d="M19.7 8.5 L28.5 19.2 L22.4 19.2 L22.4 31.5 Q22.4 33 21 33 L18.4 33 Q17 33 17 31.5 L17 19.2 L10.8 19.2 Z" fill="#fff"/></svg>
<div class="t" style="left:2113.50px;width:1000px;text-align:center;top:1309.26px;font-size:24.5px;color:#cccccc;font-weight:400;">Extrude</div>
<div class="btn" style="left:2745px;top:1220px;width:231px;height:139px"></div>
<svg width="40" height="40" viewBox="0 0 40 40" style="position:absolute;left:2840.5px;top:1254.5px;overflow:visible"><rect x="0.2" y="0" width="39.2" height="39.9" rx="5.5" fill="#050505"/><rect x="3.9" y="3.7" width="31.6" height="32.2" rx="3" fill="#f2f2f2"/></svg>
<div class="t" style="left:2360.50px;width:1000px;text-align:center;top:1309.26px;font-size:24.5px;color:#cccccc;font-weight:400;">Subdivide</div>
<div class="t" style="left:2498.00px;top:1412.80px;font-size:30px;color:#cccccc;font-weight:400;letter-spacing:0.257px;transform:scaleX(0.87);transform-origin:0 0;-webkit-text-stroke:1.0px #cccccc;">FREEFORM SURFACE TOOLS</div>
<div style="position:absolute;left:2464px;top:1400px;width:544px;height:137px;overflow:hidden">
<div class="btn" style="left:34px;top:70px;width:231px;height:140px"></div>
<div class="btn" style="left:281px;top:70px;width:231px;height:140px"></div>
<svg width="40" height="40" viewBox="0 0 40 40" style="position:absolute;left:129.5px;top:104.5px;overflow:visible"><g fill="#c9ec60" stroke="#c9ec60"><path d="M0.8 16.2 L16 0.8 L38.8 23.2 L23.7 38.6 Z" stroke-width="2" stroke-linejoin="round"/><circle cx="31.1" cy="7.8" r="5.2" stroke="none"/><circle cx="9" cy="29.8" r="5.2" stroke="none"/><path d="M31.1 7.8 L27.7 11.6 M9 29.8 L12 27.8" stroke-width="5"/></g><g fill="#3c3c3c" stroke="#3c3c3c"><circle cx="13" cy="12.5" r="3.8" stroke="none"/><circle cx="26.5" cy="26.3" r="4" stroke="none"/><path d="M13 12.5 L7.5 7.3 M26.5 26.3 L32.5 32" stroke-width="3.6"/></g></svg>
<svg width="40" height="40" viewBox="0 0 40 40" style="position:absolute;left:376.5px;top:104.5px;overflow:visible"><rect x="0.2" y="0" width="39.1" height="42" rx="5" fill="#e1dcef"/><path d="M0 11.6 L39.3 11.6 M0 27.6 L39.3 27.6 M12.5 0 L12.5 42 M27 0 L27 42" stroke="#bdb8cc" stroke-width="1"/><rect x="3.2" y="10" width="8.3" height="32" rx="3" fill="#4dd068"/><rect x="15.6" y="21.2" width="8.3" height="22" rx="3" fill="#e8368f"/><rect x="28.6" y="5.8" width="8.3" height="36" rx="3" fill="#3d9bf0"/></svg>
</div>
<div style="position:absolute;left:3008px;top:199px;width:16px;height:1338px;background:#2b2b2b"></div>
<div style="position:absolute;left:3009px;top:677px;width:14px;height:103px;background:#5a5a5a;border-radius:7px"></div>
<div style="position:absolute;left:2464px;top:1537px;width:544px;height:16px;background:#2b2b2b"></div>
<div style="position:absolute;left:2466px;top:1538px;width:531px;height:14px;background:#5a5a5a;border-radius:7px"></div>
<div style="position:absolute;left:3008px;top:1537px;width:16px;height:16px;background:#ffffff"></div>
<div style="position:absolute;left:0px;top:1553px;width:3024px;height:48px;background:#2d2d2d"></div>
<div style="position:absolute;left:0px;top:1553px;width:3024px;height:2px;background:#424242"></div>
<div class="t" style="left:32.50px;top:1569.33px;font-size:23px;color:#999999;font-weight:400;">Mouse Position: (5.70, 4.85, 2.61)</div>
<div class="t" style="left:2902.80px;top:1569.53px;font-size:23px;color:#999999;font-weight:400;letter-spacing:-0.914px;">FPS: 122</div>
<div style="position:absolute;left:0px;top:1601.5px;width:3024px;height:2.5px;background:#b8bbc2"></div>
<div style="position:absolute;left:0px;top:97px;width:1px;height:1504px;background:#444"></div>
</body></html>
